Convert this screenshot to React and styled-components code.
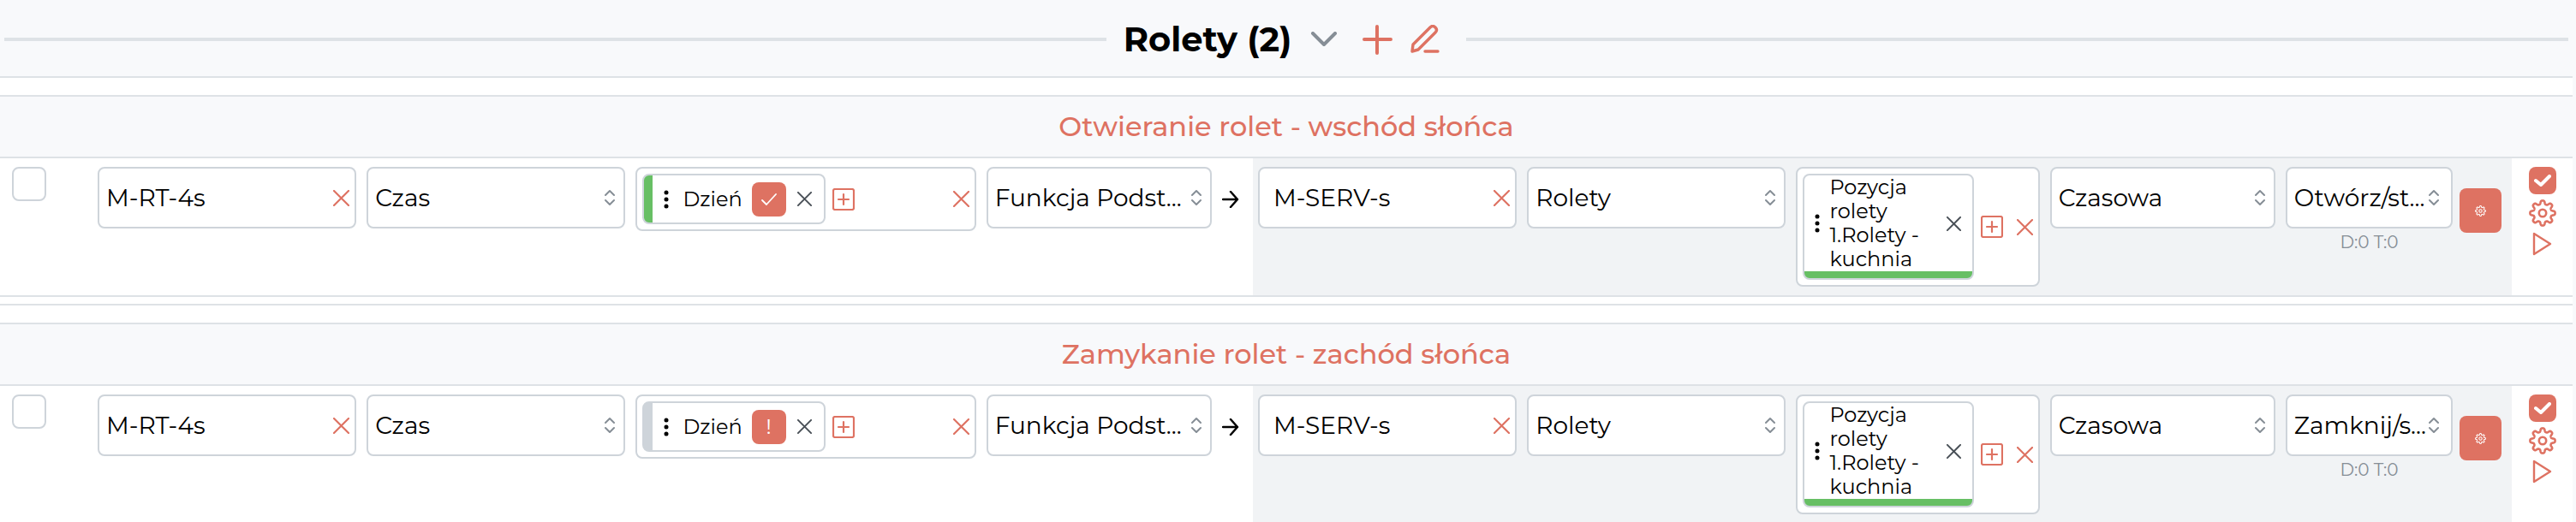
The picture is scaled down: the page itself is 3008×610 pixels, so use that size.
import React from "react";
import styled, { createGlobalStyle } from "styled-components";

const rules = [
  {
    id: "wschod",
    title: "Otwieranie rolet - wschód słońca",
    module: "M-RT-4s",
    state: "ok",
    action: "Otwórz/st...",
  },
  {
    id: "zachod",
    title: "Zamykanie rolet - zachód słońca",
    module: "M-RT-4s",
    state: "warning",
    action: "Zamknij/s...",
  },
];

// eight rounded teeth around the centre of a 32x32 box
const gearPoints = Array.from({ length: 192 }, (_, i) => {
  const angle = (i / 192) * Math.PI * 2;
  const radius = 12.6 + 2.1 * Math.tanh(1.8 * Math.cos(angle * 8));
  const x = 16 + radius * Math.sin(angle);
  const y = 16 - radius * Math.cos(angle);
  return `${x.toFixed(2)},${y.toFixed(2)}`;
}).join(" ");

const GearIcon = ({ size }) => (
  <svg width={size} height={size} viewBox="0 0 32 32" aria-hidden="true">
    <circle cx="16" cy="16" r="4.2" strokeWidth="2.6" />
    <polygon points={gearPoints} strokeWidth="2.6" />
  </svg>
);

const CloseIcon = ({ size = 19 }) => (
  <svg width={size} height={size} viewBox="0 0 19 19" aria-hidden="true">
    <path d="M1 1l17 17M18 1L1 18" strokeWidth="2.2" />
  </svg>
);

const AddIcon = () => (
  <svg width="26" height="26" viewBox="0 0 26 26" aria-hidden="true">
    <rect x="1" y="1" width="24" height="24" rx="2" strokeWidth="2.2" />
    <path d="M13 7v12M7 13h12" strokeWidth="2.2" />
  </svg>
);

const DotsIcon = () => (
  <svg width="6" height="22" viewBox="0 0 6 22" aria-hidden="true">
    <circle cx="3" cy="3" r="2.5" />
    <circle cx="3" cy="11" r="2.5" />
    <circle cx="3" cy="19" r="2.5" />
  </svg>
);

const SortIcon = () => (
  <svg width="12" height="20" viewBox="0 0 12 20" aria-hidden="true">
    <path d="M1 7l5-5 5 5M1 13l5 5 5-5" />
  </svg>
);

const SelectField = ({ label, value, narrow }) => (
  <SelectBox $narrow={narrow}>
    <Select aria-label={label} defaultValue={value}>
      <option>{value}</option>
    </Select>
    <SortIcon />
  </SelectBox>
);

const ModuleField = ({ label, value, indent }) => (
  <Field>
    <Input aria-label={label} defaultValue={value} $indent={indent} />
    <IconButton aria-label="Wyczyść">
      <CloseIcon />
    </IconButton>
  </Field>
);

const Rule = ({ rule }) => {
  const ok = rule.state === "ok";
  return (
    <RuleWrapper>
      <RuleCard>
        <RuleTitle>{rule.title}</RuleTitle>
        <RuleBody>
          <Source>
            <SelectRule type="checkbox" aria-label={rule.title} />
            <ModuleField label="Moduł" value={rule.module} />
            <SelectField label="Typ" value="Czas" />
            <TagBox>
              <Chip $ok={ok}>
                <DotsIcon />
                <span>Dzień</span>
                <StateButton aria-label="Stan">
                  {ok ? (
                    <svg width="18" height="14" viewBox="0 0 18 14">
                      <path d="M1 8l5 5L17 1" strokeWidth="1.8" />
                    </svg>
                  ) : (
                    "!"
                  )}
                </StateButton>
                <IconButton $dark aria-label="Usuń">
                  <CloseIcon size={17} />
                </IconButton>
              </Chip>
              <IconButton aria-label="Dodaj">
                <AddIcon />
              </IconButton>
              <IconButton $end aria-label="Wyczyść">
                <CloseIcon />
              </IconButton>
            </TagBox>
            <SelectField label="Funkcja" value="Funkcja Podst..." />
            <Arrow width="20" height="20" viewBox="0 0 20 20">
              <path d="M1 10h17M10 1l8 9-8 9" />
            </Arrow>
          </Source>
          <Target>
            <ModuleField label="Moduł docelowy" value="M-SERV-s" indent />
            <SelectField label="Kategoria" value="Rolety" />
            <TagBox>
              <TargetChip>
                <DotsIcon />
                <span>Pozycja rolety 1.Rolety - kuchnia</span>
                <IconButton $dark aria-label="Usuń">
                  <CloseIcon size={17} />
                </IconButton>
              </TargetChip>
              <IconButton aria-label="Dodaj">
                <AddIcon />
              </IconButton>
              <IconButton $end aria-label="Wyczyść">
                <CloseIcon />
              </IconButton>
            </TagBox>
            <SelectField label="Tryb" value="Czasowa" />
            <ActionCell>
              <ActionValue>
                <SelectField label="Akcja" value={rule.action} narrow />
                <Delay>D:0 T:0</Delay>
              </ActionValue>
              <SettingsButton aria-label="Parametry">
                <GearIcon size={13} />
              </SettingsButton>
            </ActionCell>
          </Target>
          <Actions>
            <Enabled>
              <input type="checkbox" defaultChecked aria-label="Aktywna" />
              <svg width="20" height="14" viewBox="0 0 20 14">
                <path d="M2 7l6 5L18 2" />
              </svg>
            </Enabled>
            <IconButton aria-label="Ustawienia">
              <GearIcon size={32} />
            </IconButton>
            <IconButton aria-label="Uruchom">
              <svg width="24" height="28" viewBox="0 0 24 28">
                <path d="M2 2v24l19-12z" strokeWidth="2.4" />
              </svg>
            </IconButton>
          </Actions>
        </RuleBody>
      </RuleCard>
    </RuleWrapper>
  );
};

const App = () => {
  return (
    <Wrapper>
      <GlobalStyle />
      <Header>
        <Line />
        <h1>Rolety (2)</h1>
        <HeaderButton $gray aria-label="Zwiń">
          <svg width="32" height="18" viewBox="0 0 32 18">
            <path d="M3 2l13 13L29 2" />
          </svg>
        </HeaderButton>
        <HeaderButton $wide aria-label="Dodaj">
          <svg width="36" height="36" viewBox="0 0 36 36">
            <path d="M18 3v31M3 18h31" />
          </svg>
        </HeaderButton>
        <HeaderButton aria-label="Edytuj">
          <svg width="36" height="34" viewBox="0 0 36 34">
            <path
              d="M3 31l1-8L24 3c2-2 4-2 6 0s2 4 0 6L10 29zM18 31h15"
              strokeWidth="3.4"
            />
          </svg>
        </HeaderButton>
        <Line />
      </Header>
      {rules.map((rule) => {
        return <Rule key={rule.id} rule={rule} />;
      })}
    </Wrapper>
  );
};

export default App;

const GlobalStyle = createGlobalStyle`
  :root {
    --color-red: #de7262;
    --color-green: #67bf64;
    --color-line: #dee2e6;
    --color-border: #ced4da;
    --color-light: #f8f9fb;
    --color-gray: #868e96;
  }

  * {
    box-sizing: border-box;
  }

  body {
    margin: 0;
    background: var(--color-light);
    color: black;
    overflow: hidden;
  }

  body, button, input, select {
    font-family: Montserrat, Inter, sans-serif;
  }

  svg {
    display: block;
    flex: none;
    fill: none;
    stroke: currentColor;
    stroke-width: 2;
    stroke-linecap: round;
    stroke-linejoin: round;
  }
`;

const Wrapper = styled.main`
  margin-right: 4px;
  background: white;
`;

const Header = styled.header`
  display: flex;
  align-items: center;
  height: 91px;
  padding: 2px 5px 0;
  background: var(--color-light);
  border-bottom: 2px solid var(--color-line);

  h1 {
    margin: 0 22px 0 20px;
    font-size: 40px;
    line-height: 48px;
    font-weight: 700;
  }
`;

const Line = styled.div`
  flex: 1;
  height: 4px;
  background: var(--color-line);

  &:last-child {
    margin-left: 30px;
  }
`;

const HeaderButton = styled.button`
  display: flex;
  padding: 0;
  border: none;
  background: none;
  color: ${(props) => (props.$gray ? "var(--color-gray)" : "var(--color-red)")};
  margin: ${(props) => (props.$wide ? "0 20px 0 28px" : "0")};

  svg {
    stroke-width: 4;
  }
`;

const RuleWrapper = styled.div`
  padding: 20px 0 8px;
  border-bottom: 2px solid var(--color-line);
`;

const RuleCard = styled.section`
  border-bottom: 2px solid var(--color-line);
`;

const RuleTitle = styled.h2`
  margin: 0;
  padding: 15px 0;
  border-top: 2px solid var(--color-line);
  border-bottom: 2px solid var(--color-line);
  background: var(--color-light);
  color: var(--color-red);
  text-align: center;
  font-size: 32px;
  line-height: 40px;
  font-weight: 500;
`;

const RuleBody = styled.div`
  display: grid;
  grid-template-columns: 1463fr 1470fr 71px;
  min-height: 160px;
`;

const Source = styled.div`
  display: grid;
  grid-template-columns: 88px 302fr 302fr 397fr 263fr 36px;
  gap: 12px;
  align-items: start;
  padding: 10px 0 10px 14px;
`;

const Target = styled.div`
  display: grid;
  grid-template-columns: 302fr 302fr 284fr 263fr 252fr;
  gap: 12px;
  align-items: start;
  padding: 10px 12px 10px 6px;
  background: #f1f3f5;
`;

const SelectRule = styled.input`
  appearance: none;
  width: 40px;
  height: 40px;
  margin: 0;
  border: 2px solid var(--color-border);
  border-radius: 8px;
  background: white;
`;

const Field = styled.div`
  display: flex;
  align-items: center;
  height: 72px;
  min-width: 0;
  padding-right: 6px;
  border: 2px solid var(--color-border);
  border-radius: 8px;
  background: white;
`;

const Input = styled.input`
  flex: 1;
  min-width: 0;
  height: 68px;
  padding: 0 0 0 ${(props) => (props.$indent ? "16px" : "8px")};
  border: none;
  outline: none;
  background: none;
  font-size: 28px;
`;

const SelectBox = styled.div`
  display: grid;
  align-items: center;
  min-width: 0;
  color: var(--color-gray);

  > * {
    grid-area: 1 / 1;
  }

  svg {
    justify-self: end;
    margin-right: ${(props) => (props.$narrow ? "16px" : "12px")};
    pointer-events: none;
  }
`;

const Select = styled.select`
  appearance: none;
  width: 100%;
  height: 72px;
  padding: 0 8px;
  border: 2px solid var(--color-border);
  border-radius: 8px;
  background: white;
  color: black;
  font-size: 28px;
`;

const IconButton = styled.button`
  display: flex;
  padding: 0;
  border: none;
  background: none;
  color: ${(props) => (props.$dark ? "#495057" : "var(--color-red)")};
  margin-left: ${(props) => (props.$end ? "auto" : "0")};
`;

const TagBox = styled.div`
  display: flex;
  align-items: center;
  gap: 8px;
  min-width: 0;
  padding: 6px;
  border: 2px solid var(--color-border);
  border-radius: 8px;
  background: white;
`;

const Chip = styled.div`
  display: flex;
  align-items: center;
  height: 59px;
  padding: 0 14px 0 23px;
  border: 2px solid var(--color-border);
  border-radius: 8px;
  font-size: 24px;
  line-height: 28px;
  background: linear-gradient(
      to right,
      ${(props) => (props.$ok ? "var(--color-green)" : "var(--color-border)")} 10px,
      white 10px
    );

  > svg {
    fill: black;
    stroke: none;
    margin-right: 16px;
  }
`;

const StateButton = styled.button`
  display: flex;
  align-items: center;
  justify-content: center;
  width: 40px;
  height: 40px;
  margin: 0 13px 0 11px;
  padding: 0;
  border: none;
  border-radius: 8px;
  background: var(--color-red);
  color: white;
  font-size: 24px;
`;

const TargetChip = styled.div`
  display: flex;
  align-items: center;
  flex: 1;
  max-width: 200px;
  padding: 0 13px 8px 12px;
  border: 2px solid var(--color-border);
  border-radius: 8px;
  background: linear-gradient(to top, var(--color-green) 8px, white 8px);
  font-size: 24px;
  line-height: 28px;

  > svg {
    fill: black;
    stroke: none;
    margin-right: 11px;
  }

  span {
    flex: 1;
  }
`;

const Arrow = styled.svg`
  margin-top: 28px;
  stroke-width: 2.5;
`;

const ActionCell = styled.div`
  display: flex;
  align-items: start;
  gap: 8px;
  min-width: 0;
`;

const ActionValue = styled.div`
  flex: 1;
  min-width: 0;
`;

const Delay = styled.p`
  margin: 0;
  padding-top: 2px;
  color: var(--color-gray);
  text-align: center;
  font-size: 20px;
  line-height: 28px;
`;

const SettingsButton = styled.button`
  display: flex;
  align-items: center;
  justify-content: center;
  width: 49px;
  height: 52px;
  margin-top: 25px;
  padding: 0;
  border: none;
  border-radius: 8px;
  background: var(--color-red);
  color: white;
`;

const Actions = styled.div`
  display: flex;
  flex-direction: column;
  align-items: center;
  gap: 6px;
  padding-top: 10px;
`;

const Enabled = styled.label`
  display: grid;
  place-items: center;
  width: 32px;
  height: 32px;
  color: white;

  > * {
    grid-area: 1 / 1;
  }

  input {
    appearance: none;
    width: 32px;
    height: 32px;
    margin: 0;
    border-radius: 8px;
    background: var(--color-red);
  }

  svg {
    z-index: 1;
    stroke-width: 4;
  }
`;
